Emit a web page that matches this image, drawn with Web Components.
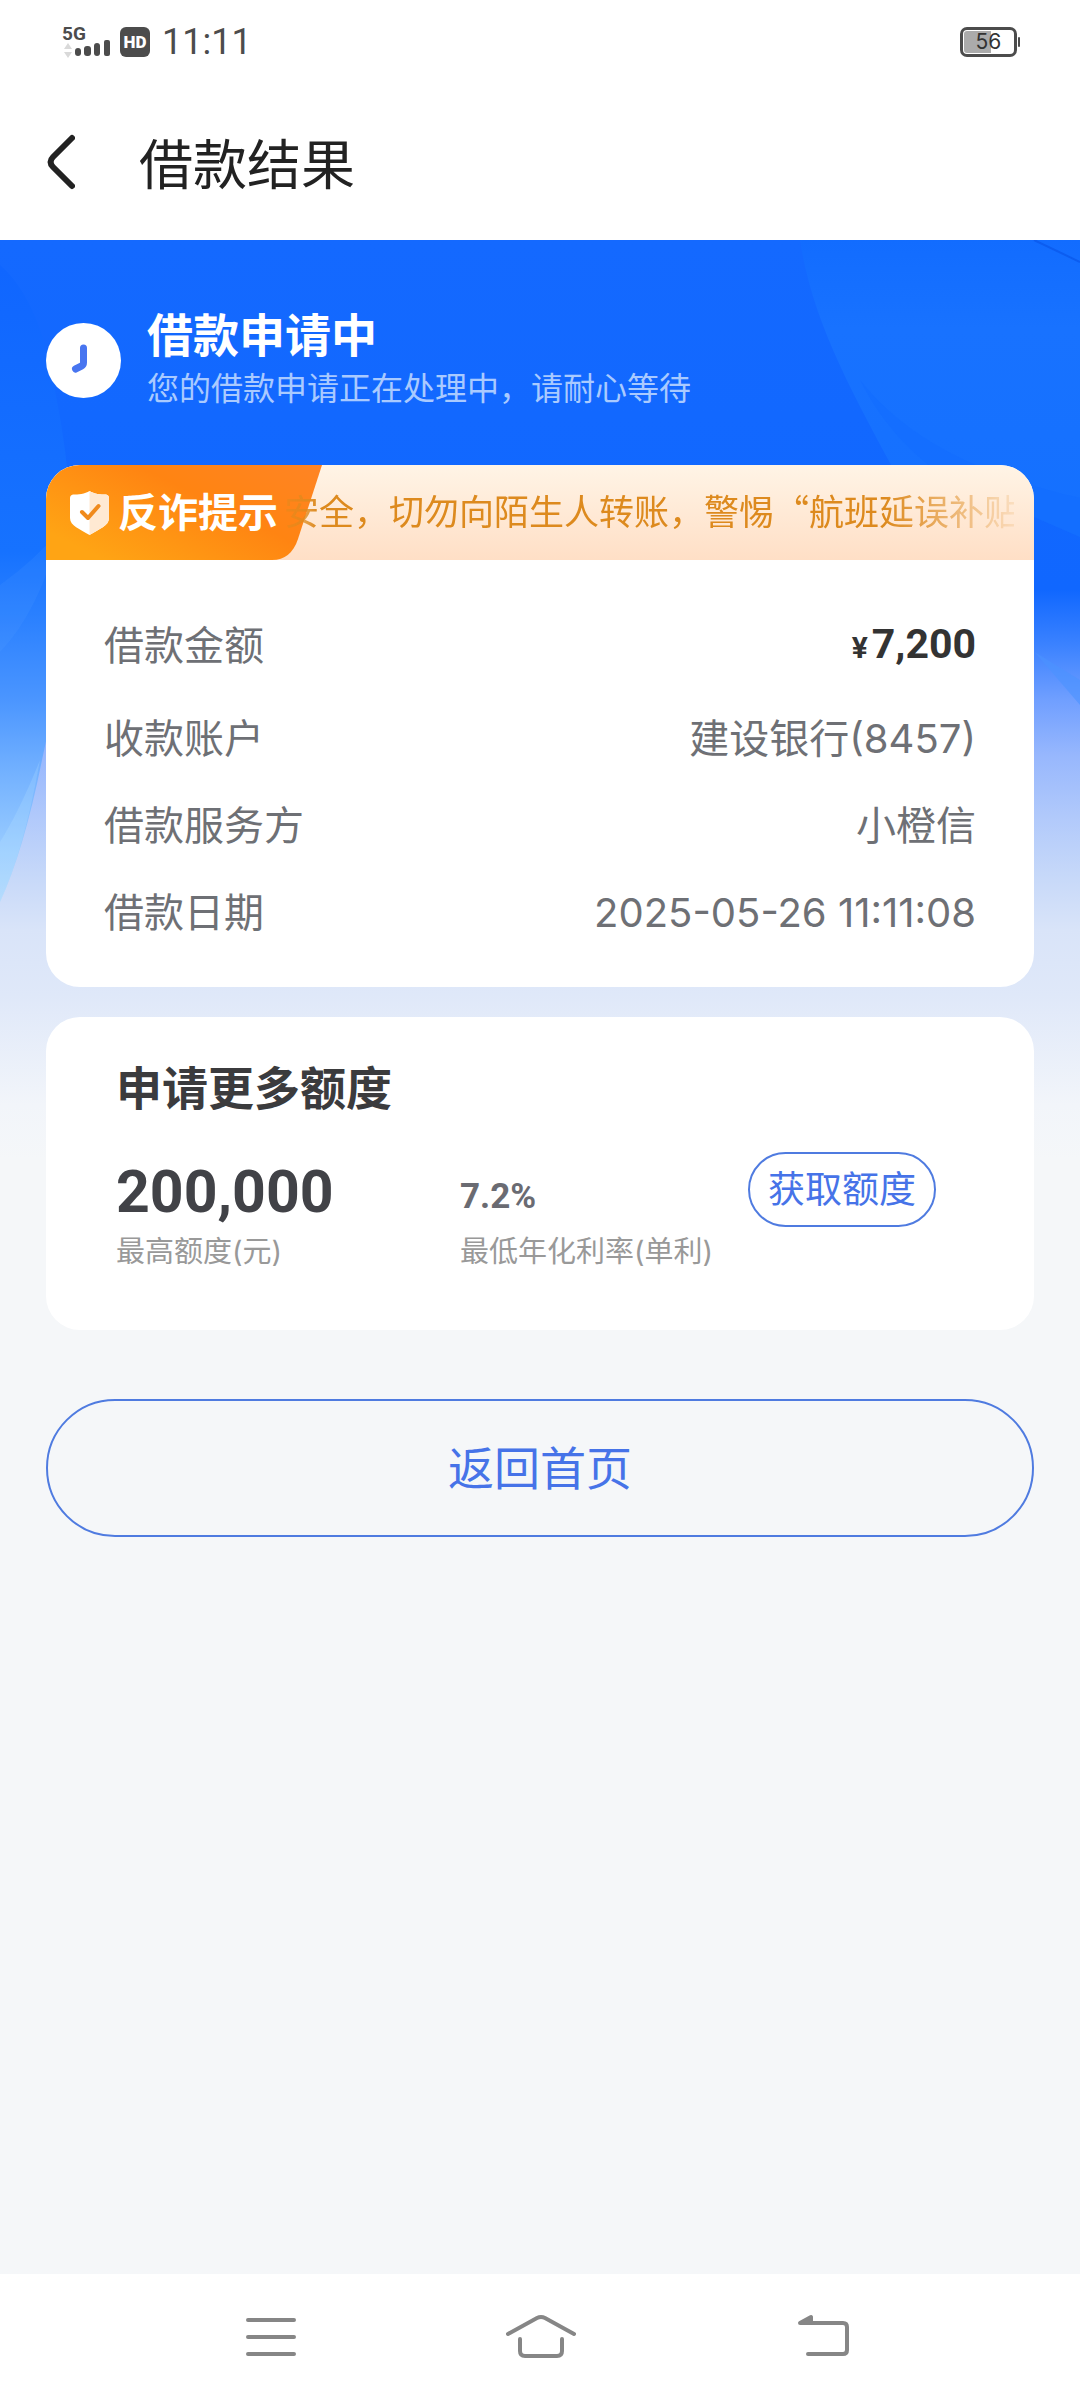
<!DOCTYPE html>
<html lang="zh-CN">
<head>
<meta charset="utf-8">
<meta name="viewport" content="width=device-width, initial-scale=1">
<title>借款结果</title>
<style>
html,body{margin:0;padding:0}
body{background:#f5f7f9;font-family:Inter,"Noto Sans CJK SC",sans-serif;color:#6e7075}
</style>
</head>
<body>
<loan-result-page></loan-result-page>
<script>
const define=(name,html)=>customElements.define(name,class extends HTMLElement{
  constructor(){super();this.attachShadow({mode:'open'}).innerHTML=html;}
});

define('status-bar',`
<style>
:host{display:flex;align-items:center;height:84px;padding:0 60px;background:#fff;color:#4c4c4c}
.signal{width:50px;height:48px;margin-right:10px}
.hd{display:grid;place-items:center;width:30px;height:30px;border-radius:6px;background:#4c4c4c;color:#fff;font:900 17px/30px Roboto,sans-serif}
time{margin-left:12px;font:400 36px/44px Roboto,sans-serif}
.battery{margin-left:auto;display:flex;align-items:center;gap:1px}
.cell{box-sizing:border-box;width:57px;height:30px;border:3px solid #4c4c4c;border-radius:7px;padding:1px;display:flex}
.level{flex:1;border-radius:3px;background:linear-gradient(90deg,#ababab 56%,#fff 56%);color:#333;font-size:21px;line-height:22px;text-align:center}
.cap{width:2px;height:10px;background:#4c4c4c;border-radius:1px}
</style>
<svg class="signal" viewBox="0 -6 50 48" fill="#4c4c4c"><text x="2" y="16" font-family="Roboto,sans-serif" font-weight="700" font-size="19">5G</text>
<path d="M8 19l4 6H4zM8 34l4-6H4z" fill="#d9d9d9"/>
<rect x="15" y="24" width="6" height="8" rx="3"/><rect x="24" y="22" width="7" height="10" rx="3"/><rect x="34" y="19" width="6" height="13" rx="3"/><rect x="44" y="16" width="6" height="16" rx="2"/></svg>
<span class="hd">HD</span><time>11:11</time>
<span class="battery"><span class="cell"><span class="level">56</span></span><span class="cap"></span></span>`);

define('title-bar',`
<style>
:host{display:flex;align-items:center;height:156px;padding:0 47px;background:#fff;color:#222}
button{display:flex;padding:0;border:0;background:none;color:inherit}
svg{width:28px;height:56px}
h1{margin:0 0 0 64px;padding-top:8px;font-size:54px;line-height:72px;font-weight:400}
</style>
<button aria-label="返回"><svg viewBox="0 0 28 56" fill="none" stroke="currentColor" stroke-width="6" stroke-linecap="round" stroke-linejoin="round"><path d="M25 4L6 23Q1 28 6 33L25 52"/></svg></button>
<h1><slot></slot></h1>`);

define('hero-backdrop',`
<style>
:host{display:block;position:absolute;inset:0 0 auto 0;height:920px;z-index:-1}
svg{display:block;width:100%;height:100%}
</style>
<svg viewBox="0 0 1080 920" preserveAspectRatio="none">
<defs>
<linearGradient id="base" x1="0" y1="0" x2="0" y2="1">
<stop offset="0" stop-color="#1469ff"/><stop offset=".38" stop-color="#1067ff"/><stop offset=".44" stop-color="#3b82ff"/><stop offset=".5" stop-color="#709fff"/><stop offset=".56" stop-color="#97b7fd"/><stop offset=".63" stop-color="#b2cafb"/><stop offset=".69" stop-color="#c6d8f9"/><stop offset=".75" stop-color="#d9e4f9"/><stop offset=".82" stop-color="#dfe8f9"/><stop offset=".94" stop-color="#f2f5fa"/><stop offset="1" stop-color="#f5f7f9"/>
</linearGradient>
<linearGradient id="left" x1="0" y1="0" x2="0" y2="1">
<stop offset="0" stop-color="#1066ff"/><stop offset=".45" stop-color="#1672ff"/><stop offset=".55" stop-color="#2a80ff"/><stop offset=".68" stop-color="#4a95ff"/><stop offset=".8" stop-color="#74b2ff"/><stop offset=".92" stop-color="#9accff"/><stop offset="1" stop-color="#b2d8fd"/>
</linearGradient>
<linearGradient id="right" x1="0" y1="0" x2="0" y2="1"><stop offset="0" stop-color="#126cff"/><stop offset=".3" stop-color="#1872ff"/><stop offset="1" stop-color="#1470ff"/></linearGradient>
</defs>
<rect width="1080" height="920" fill="url(#base)"/>
<path d="M0 25Q40 60 55 150Q75 250 70 330Q60 440 42 520Q24 610 0 662Z" fill="url(#left)"/>
<path d="M60 290Q40 370 0 412V345Q35 320 60 290Z" fill="#6bb0ff" opacity=".1"/>
<path d="M40 520Q24 610 0 662V602Q20 570 40 520Z" fill="#c8f0ff" opacity=".18"/>
<path d="M800 0C812 80 850 150 905 250L1034 277L1080 297V0Z" fill="url(#right)"/>
<path d="M860 140C900 190 960 230 1080 258V297L1034 277C970 260 900 220 860 140Z" fill="#126cff" opacity=".5"/>
<path d="M1020 395L1080 465V440L1020 403Z" fill="#4b93ff" opacity=".6"/>
<path d="M1034 0L1080 22" stroke="#0c5df0" stroke-width="2"/>
</svg>`);

define('progress-notice',`
<style>
:host{display:flex;align-items:center;gap:26px;height:108px;color:#fff}
svg{width:75px;height:75px;flex:none}
div{padding-top:4px}
h2{margin:0;font-size:46px;line-height:54px;font-weight:700}
p{margin:0;font-size:32px;line-height:54px;color:#a9caff}
</style>
<svg viewBox="0 0 75 75"><circle cx="37.500" cy="37.500" r="37.500" fill="#fff"/><path d="M37.500 25V39.500Q37.500 42 35.500 43L29.500 46" fill="none" stroke="#4875f0" stroke-width="7" stroke-linecap="round"/></svg>
<div><h2><slot name="title"></slot></h2><p><slot></slot></p></div>`);

define('fraud-banner',`
<style>
:host{display:flex;height:95px;background:linear-gradient(#fff4e6,#ffdfc6)}
.tab{position:relative;display:flex;align-items:center;flex:none;box-sizing:border-box;width:276px;padding-left:24px;gap:9px;color:#fff}
.shape{position:absolute;inset:0;width:100%;height:100%}
.shield{position:relative;width:39px;height:44px}
b{position:relative;font-size:40px;line-height:48px;font-weight:700}
.news{position:relative;flex:1;min-width:0;margin:0 20px 0 -38px;overflow:hidden;white-space:nowrap;font:400 35px/90px "Noto Sans CJK SC",sans-serif;color:#dd8a1e;-webkit-mask:linear-gradient(90deg,#0006,#000 34px,#000 calc(100% - 130px),#0002);mask:linear-gradient(90deg,#0006,#000 34px,#000 calc(100% - 130px),#0002)}
</style>
<div class="tab">
<svg class="shape" viewBox="0 0 276 95" preserveAspectRatio="none"><defs><linearGradient id="o" x1="0" y1=".7" x2="1" y2="0"><stop offset="0" stop-color="#ffa414"/><stop offset=".55" stop-color="#ff8412"/><stop offset="1" stop-color="#ff8424"/></linearGradient></defs><path d="M0 0H276L252 74Q245 95 226 95H0Z" fill="url(#o)"/></svg>
<svg class="shield" viewBox="0 0 39 44"><path d="M19.500 0C24 3 31 3.500 36 3.500Q39 4 39 7V27C39 35 29 38 19.500 44C10 38 0 35 0 27V7Q0 4 3 3.500C8 3.500 15 3 19.500 0Z" fill="#fff"/><path d="M19.500 0C24 3 31 3.500 36 3.500Q39 4 39 7V27C39 35 29 38 19.500 44Z" fill="#ffe9d2"/><path d="M12 21L18 27L28.500 15" fill="none" stroke="#f08a1c" stroke-width="4" stroke-linecap="round" stroke-linejoin="round"/></svg>
<b><slot name="tag"></slot></b></div>
<div class="news"><slot></slot></div>`);

define('info-card',`
<style>
:host{display:block;background:#fff;border-radius:34px;overflow:hidden}
.body{padding:42px 58px 31px}
</style>
<slot name="banner"></slot><div class="body"><slot></slot></div>`);

define('info-row',`
<style>
:host{display:flex;align-items:center;justify-content:space-between;min-height:87px;font-size:40px;line-height:56px}
:host([lead]){margin-bottom:6px}
:host([lead]) .value{color:#333;font-family:Roboto,sans-serif;font-weight:700;font-size:41px}
</style>
<span><slot name="label"></slot></span><span class="value"><slot></slot></span>`);

define('money-sign',`<style>:host{font-size:30px;margin-right:4px}</style><slot></slot>`);

define('pill-button',`
<style>
:host{display:block}
button{box-sizing:border-box;width:100%;height:138px;border:2px solid #4f7be0;border-radius:69px;background:none;color:#4673e8;font:400 46px/60px Inter,"Noto Sans CJK SC",sans-serif;padding:0}
:host([small]) button{height:75px;font-size:37px;line-height:48px;padding:0 18px}
</style>
<button type="button"><slot></slot></button>`);

define('quota-stat',`
<style>
:host{display:flex;flex-direction:column}
b{height:80px;line-height:84px;font-family:Roboto,sans-serif;font-weight:700;font-size:59px;color:#414247}
:host([minor]) b{font-size:35px;line-height:94px;color:#6a6b72}
span{font-size:29px;line-height:44px;color:#999;white-space:nowrap}
</style>
<b><slot></slot></b><span><slot name="label"></slot></span>`);

define('quota-card',`
<style>
:host{display:block;background:#fff;border-radius:34px;padding:41px 98px 56px 70px}
h3{margin:0 0 32px;font-size:46px;line-height:60px;font-weight:700;color:#3b3b3d}
.stats{display:grid;grid-template-columns:344fr 288fr auto}
pill-button{margin-top:2px}
</style>
<h3>申请更多额度</h3>
<div class="stats">
<quota-stat>200,000<span slot="label">最高额度(元)</span></quota-stat>
<quota-stat minor>7.2%<span slot="label">最低年化利率(单利)</span></quota-stat>
<pill-button small>获取额度</pill-button>
</div>`);

define('system-nav',`
<style>
:host{display:flex;align-items:center;justify-content:center;gap:210px;height:126px;padding-left:15px;background:#fff}
button{display:flex;padding:0;border:0;background:none}
.home{margin-right:12px}
svg{height:46px;fill:none;stroke:#868686;stroke-width:4;stroke-linecap:round;stroke-linejoin:round}
</style>
<button aria-label="最近任务"><svg width="50" viewBox="0 0 50 46"><path d="M2 6H48M2 23H48M2 40H48"/></svg></button>
<button class="home" aria-label="主页"><svg width="70" viewBox="0 0 70 46"><path d="M2 20L31 4Q35 2 39 4L68 20M14 25V37Q14 42 19 42H51Q56 42 56 37V25"/></svg></button>
<button aria-label="返回"><svg width="52" viewBox="0 0 52 46"><path d="M10 9H45Q49 9 49 13V36Q49 40 45 40H10"/><path d="M2 9L13 3V9Z" fill="#868686"/></svg></button>`);

define('loan-result-page',`
<style>
:host{display:flex;flex-direction:column;min-height:100vh}
main{position:relative;z-index:0;flex:1;padding:66px 46px 0}
progress-notice{margin-bottom:51px}
quota-card{margin:30px 0 69px}
</style>
<status-bar></status-bar>
<title-bar>借款结果</title-bar>
<main>
<hero-backdrop></hero-backdrop>
<progress-notice><span slot="title">借款申请中</span>您的借款申请正在处理中，请耐心等待</progress-notice>
<info-card>
<fraud-banner slot="banner"><span slot="tag">反诈提示</span>安全，切勿向陌生人转账，警惕“航班延误补贴</fraud-banner>
<info-row lead><span slot="label">借款金额</span><money-sign>¥</money-sign>7,200</info-row>
<info-row><span slot="label">收款账户</span>建设银行(8457)</info-row>
<info-row><span slot="label">借款服务方</span>小橙信</info-row>
<info-row><span slot="label">借款日期</span>2025-05-26 11:11:08</info-row>
</info-card>
<quota-card></quota-card>
<pill-button>返回首页</pill-button>
</main>
<system-nav></system-nav>`);
</script>
</body>
</html>
